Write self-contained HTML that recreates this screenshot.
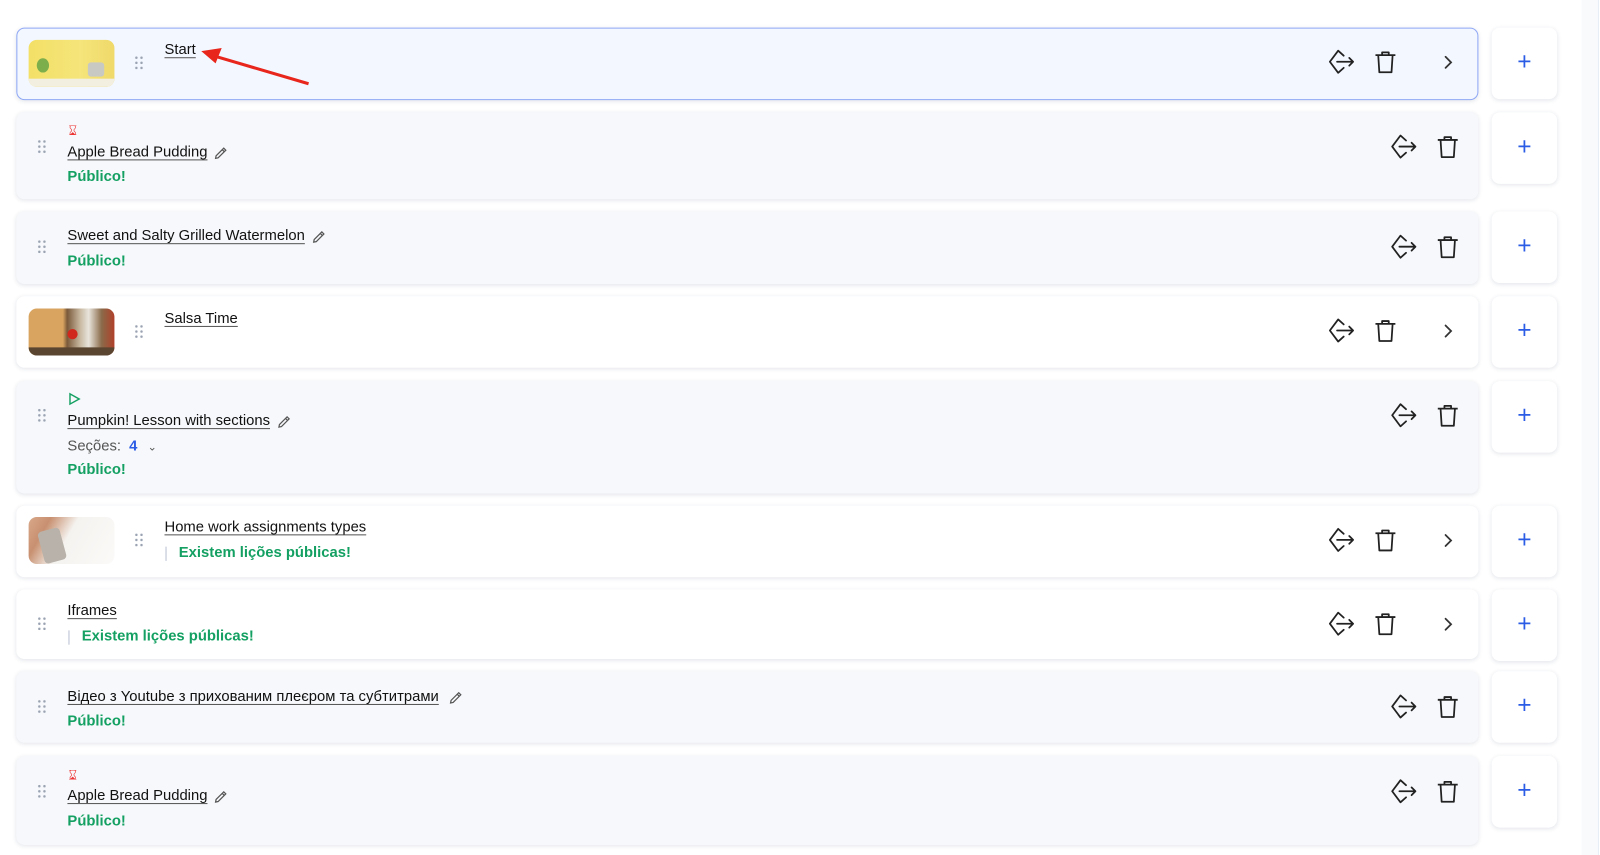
<!DOCTYPE html>
<html><head><meta charset="utf-8"><style>
*{box-sizing:border-box;margin:0;padding:0}
body{width:1600px;height:855px;background:#fff;font-family:"Liberation Sans",sans-serif;position:relative;overflow:hidden;color:#111}
#wrap{position:absolute;left:0;top:0;width:1566px;height:837px;transform:scale(1.0217);transform-origin:0 0}
.card{position:absolute;left:16px;width:1431px;border-radius:8px;box-shadow:0 1px 4px rgba(30,50,90,.12)}
.g{background:#f6f8fb}.w{background:#fff}
.sel{background:#f3f7ff;border:1px solid #8fa8f5}
.plus{position:absolute;left:1460px;width:64px;height:70px;background:#fff;border-radius:8px;box-shadow:0 1px 4px rgba(30,50,90,.12);color:#2b5ce6;font-size:24px;text-align:center;line-height:68px;font-weight:300}
.t{position:absolute;font-size:14.5px;text-decoration:underline;text-underline-offset:3px;text-decoration-color:#555;white-space:nowrap}
.pub{position:absolute;color:#14a062;font-size:14.5px;font-weight:bold}
.dots{position:absolute;width:10px;height:14px;background-image:radial-gradient(circle,#9aa3b2 1.1px,transparent 1.4px);background-size:5px 5px}
.ic{position:absolute;width:26px;height:26px}
.th{position:absolute;left:28px;width:84px;height:46px;border-radius:8px;overflow:hidden}
.pen{position:absolute;width:14px;height:14px}
</style></head><body>
<div id="wrap">
<div style="position:absolute;left:1548px;top:0;width:17px;height:837px;background:#f8fafc;border-right:1px solid #e8eef5"></div>

<svg width="0" height="0" style="position:absolute"><defs>
<g id="sh" fill="none" stroke="#222" stroke-width="1.6" stroke-linecap="round" stroke-linejoin="round"><path d="M14 6 L9 1.5 L1.5 11.5 L9 21.5 L14 17"/><path d="M8 11.5 H22.5 M19 8 L22.5 11.5 L19 15"/></g>
<g id="tr" fill="none" stroke="#222" stroke-width="1.6" stroke-linejoin="round"><path d="M3 5.5 H21 M9 5.5 V3 H15 V5.5 M5.5 5.5 L6.5 21 H17.5 L18.5 5.5"/></g>
<g id="ch" fill="none" stroke="#333" stroke-width="1.6" stroke-linecap="round"><path d="M10 7 L15 12 L10 17"/></g>
<g id="pn" fill="none" stroke="#555" stroke-width="1.2"><path d="M2 12 L2.5 9.5 L10 2 L12 4 L4.5 11.5 Z M8.5 3.5 L10.5 5.5"/></g>
</defs></svg>

<!-- row1 -->
<div class="card sel" style="top:27px;height:71px"></div>
<div class="th" style="top:39px;background:linear-gradient(90deg,#f3e067,#f5e57a 60%,#efd96a);"><div style="position:absolute;left:0;bottom:0;width:84px;height:8px;background:#f3efe0"></div><div style="position:absolute;left:8px;top:18px;width:12px;height:14px;background:#7cae4c;border-radius:50%"></div><div style="position:absolute;left:58px;top:22px;width:16px;height:14px;background:#c9c9c4;border-radius:3px"></div></div>
<div class="dots" style="left:131px;top:54px"></div>
<div class="t" style="left:161px;top:41px">Start</div>
<svg style="position:absolute;left:195px;top:43px" width="112" height="44"><path d="M107 39 L12 11" stroke="#e8261c" stroke-width="3"/><path d="M2 7 L22 4 L16 19 Z" fill="#e8261c"/></svg>
<svg class="ic" style="left:1300px;top:48px" viewBox="0 0 24 24"><use href="#sh"/></svg>
<svg class="ic" style="left:1343px;top:48px" viewBox="0 0 24 24"><use href="#tr"/></svg>
<svg class="ic" style="left:1404px;top:48px" viewBox="0 0 24 24"><use href="#ch"/></svg>
<div class="plus" style="top:27px">+</div>

<!-- row2 -->
<div class="card g" style="top:110px;height:85px"></div>
<div style="position:absolute;left:67px;top:120px;color:#e33;font-size:13px">⌛︎</div>
<div class="dots" style="left:36px;top:136px"></div>
<div class="t" style="left:66px;top:141px">Apple Bread Pudding</div>
<svg class="pen" style="left:209px;top:143px" viewBox="0 0 14 14"><use href="#pn"/></svg>
<div class="pub" style="left:66px;top:165px">Público!</div>
<svg class="ic" style="left:1361px;top:131px" viewBox="0 0 24 24"><use href="#sh"/></svg>
<svg class="ic" style="left:1404px;top:131px" viewBox="0 0 24 24"><use href="#tr"/></svg>
<div class="plus" style="top:110px">+</div>

<!-- row3 -->
<div class="card g" style="top:207px;height:71px"></div>
<div class="dots" style="left:36px;top:234px"></div>
<div class="t" style="left:66px;top:223px">Sweet and Salty Grilled Watermelon</div>
<svg class="pen" style="left:305px;top:225px" viewBox="0 0 14 14"><use href="#pn"/></svg>
<div class="pub" style="left:66px;top:248px">Público!</div>
<svg class="ic" style="left:1361px;top:229px" viewBox="0 0 24 24"><use href="#sh"/></svg>
<svg class="ic" style="left:1404px;top:229px" viewBox="0 0 24 24"><use href="#tr"/></svg>
<div class="plus" style="top:207px">+</div>

<!-- row4 -->
<div class="card w" style="top:290px;height:70px"></div>
<div class="th" style="top:302px;background:linear-gradient(90deg,#d9a460 0,#d9a460 40%,#7a5a3a 45%,#c8b8a0 60%,#e8e4dc 70%,#8a6b4a 85%,#b0402a);"><div style="position:absolute;left:0;bottom:0;width:84px;height:8px;background:#5a4530"></div><div style="position:absolute;left:38px;top:20px;width:10px;height:10px;background:#d0281c;border-radius:50%"></div></div>
<div class="dots" style="left:131px;top:317px"></div>
<div class="t" style="left:161px;top:304px">Salsa Time</div>
<svg class="ic" style="left:1300px;top:311px" viewBox="0 0 24 24"><use href="#sh"/></svg>
<svg class="ic" style="left:1343px;top:311px" viewBox="0 0 24 24"><use href="#tr"/></svg>
<svg class="ic" style="left:1404px;top:311px" viewBox="0 0 24 24"><use href="#ch"/></svg>
<div class="plus" style="top:290px">+</div>

<!-- row5 -->
<div class="card g" style="top:373px;height:110px"></div>
<svg style="position:absolute;left:67px;top:384px" width="12" height="14"><path d="M1.5 1.5 L10.5 6.5 L1.5 11.5 Z" fill="none" stroke="#14a062" stroke-width="1.4"/></svg>
<div class="dots" style="left:36px;top:399px"></div>
<div class="t" style="left:66px;top:404px">Pumpkin! Lesson with sections</div>
<svg class="pen" style="left:271px;top:406px" viewBox="0 0 14 14"><use href="#pn"/></svg>
<div style="position:absolute;left:66px;top:429px;font-size:14.5px;color:#555">Seções: <b style="color:#2b5ce6;margin-left:4px">4</b> <span style="font-size:11px;margin-left:6px">⌄</span></div>
<div class="pub" style="left:66px;top:452px">Público!</div>
<svg class="ic" style="left:1361px;top:394px" viewBox="0 0 24 24"><use href="#sh"/></svg>
<svg class="ic" style="left:1404px;top:394px" viewBox="0 0 24 24"><use href="#tr"/></svg>
<div class="plus" style="top:373px">+</div>

<!-- row6 -->
<div class="card w" style="top:495px;height:70px"></div>
<div class="th" style="top:506px;background:linear-gradient(120deg,#d8a88a 0,#c89070 20%,#f5f3f0 45%,#fbfaf8);"><div style="position:absolute;left:12px;top:12px;width:22px;height:32px;background:#b8b2aa;border-radius:4px;transform:rotate(-15deg)"></div></div>
<div class="dots" style="left:131px;top:521px"></div>
<div class="t" style="left:161px;top:508px">Home work assignments types</div>
<div style="position:absolute;left:162px;top:535px;width:1px;height:14px;background:#b8c0d0"></div>
<div class="pub" style="left:175px;top:533px">Existem lições públicas!</div>
<svg class="ic" style="left:1300px;top:516px" viewBox="0 0 24 24"><use href="#sh"/></svg>
<svg class="ic" style="left:1343px;top:516px" viewBox="0 0 24 24"><use href="#tr"/></svg>
<svg class="ic" style="left:1404px;top:516px" viewBox="0 0 24 24"><use href="#ch"/></svg>
<div class="plus" style="top:495px">+</div>

<!-- row7 -->
<div class="card w" style="top:577px;height:68px"></div>
<div class="dots" style="left:36px;top:603px"></div>
<div class="t" style="left:66px;top:590px">Iframes</div>
<div style="position:absolute;left:67px;top:617px;width:1px;height:14px;background:#b8c0d0"></div>
<div class="pub" style="left:80px;top:615px">Existem lições públicas!</div>
<svg class="ic" style="left:1300px;top:598px" viewBox="0 0 24 24"><use href="#sh"/></svg>
<svg class="ic" style="left:1343px;top:598px" viewBox="0 0 24 24"><use href="#tr"/></svg>
<svg class="ic" style="left:1404px;top:598px" viewBox="0 0 24 24"><use href="#ch"/></svg>
<div class="plus" style="top:577px">+</div>

<!-- row8 -->
<div class="card g" style="top:657px;height:70px"></div>
<div class="dots" style="left:36px;top:684px"></div>
<div class="t" style="left:66px;top:674px">Відео з Youtube з прихованим плеєром та субтитрами</div>
<svg class="pen" style="left:439px;top:676px" viewBox="0 0 14 14"><use href="#pn"/></svg>
<div class="pub" style="left:66px;top:698px">Público!</div>
<svg class="ic" style="left:1361px;top:679px" viewBox="0 0 24 24"><use href="#sh"/></svg>
<svg class="ic" style="left:1404px;top:679px" viewBox="0 0 24 24"><use href="#tr"/></svg>
<div class="plus" style="top:657px">+</div>

<!-- row9 -->
<div class="card g" style="top:740px;height:87px"></div>
<div style="position:absolute;left:67px;top:751px;color:#e33;font-size:13px">⌛︎</div>
<div class="dots" style="left:36px;top:767px"></div>
<div class="t" style="left:66px;top:771px">Apple Bread Pudding</div>
<svg class="pen" style="left:209px;top:773px" viewBox="0 0 14 14"><use href="#pn"/></svg>
<div class="pub" style="left:66px;top:796px">Público!</div>
<svg class="ic" style="left:1361px;top:762px" viewBox="0 0 24 24"><use href="#sh"/></svg>
<svg class="ic" style="left:1404px;top:762px" viewBox="0 0 24 24"><use href="#tr"/></svg>
<div class="plus" style="top:740px">+</div>
</div>
</body></html>
